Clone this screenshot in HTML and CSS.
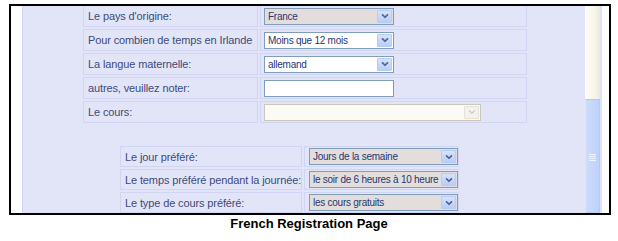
FILE: index.html
```html
<!DOCTYPE html>
<html lang="fr">
<head>
  <meta charset="UTF-8">
  <title>French Registration Page</title>
  <link rel="stylesheet" href="styles.css">
</head>
<body>
<div class="shot">
  <div class="gutter"></div>
  <div class="page">
    <div class="form main-form">
      <div class="cell label">Le pays d'origine:</div>
      <div class="cell field">
        <div class="select grey w-short"><span class="value">France</span><span class="arrow"><svg viewBox="0 0 9 6"><polyline points="1.2,1.2 4.5,4.4 7.8,1.2"/></svg></span></div>
      </div>
      <div class="cell label">Pour combien de temps en Irlande</div>
      <div class="cell field">
        <div class="select w-short"><span class="value">Moins que 12 mois</span><span class="arrow"><svg viewBox="0 0 9 6"><polyline points="1.2,1.2 4.5,4.4 7.8,1.2"/></svg></span></div>
      </div>
      <div class="cell label">La langue maternelle:</div>
      <div class="cell field">
        <div class="select w-short"><span class="value">allemand</span><span class="arrow"><svg viewBox="0 0 9 6"><polyline points="1.2,1.2 4.5,4.4 7.8,1.2"/></svg></span></div>
      </div>
      <div class="cell label">autres, veuillez noter:</div>
      <div class="cell field">
        <div class="textbox w-short"></div>
      </div>
      <div class="cell label">Le cours:</div>
      <div class="cell field">
        <div class="select disabled w-long"><span class="value"></span><span class="arrow"><svg viewBox="0 0 9 6"><polyline points="1.2,1.2 4.5,4.4 7.8,1.2"/></svg></span></div>
      </div>
    </div>

    <div class="form pref-form">
      <div class="cell label">Le jour préféré:</div>
      <div class="cell field">
        <div class="select grey w-pref"><span class="value">Jours de la semaine</span><span class="arrow"><svg viewBox="0 0 9 6"><polyline points="1.2,1.2 4.5,4.4 7.8,1.2"/></svg></span></div>
      </div>
      <div class="cell label">Le temps préféré pendant la journée:</div>
      <div class="cell field">
        <div class="select grey w-pref"><span class="value">le soir de 6 heures à 10 heure</span><span class="arrow"><svg viewBox="0 0 9 6"><polyline points="1.2,1.2 4.5,4.4 7.8,1.2"/></svg></span></div>
      </div>
      <div class="cell label">Le type de cours préféré:</div>
      <div class="cell field">
        <div class="select grey w-pref"><span class="value">les cours gratuits</span><span class="arrow"><svg viewBox="0 0 9 6"><polyline points="1.2,1.2 4.5,4.4 7.8,1.2"/></svg></span></div>
      </div>
    </div>
  </div>
  <div class="scroll">
    <div class="thumb"><span class="grip"></span></div>
  </div>
  <div class="edge"></div>
  <div class="margin"></div>
</div>
<p class="caption">French Registration Page</p>
</body>
</html>
```

FILE: styles.css
```css
body {
  margin: 0;
  background: #fff;
  font-family: "Liberation Sans", Arial, sans-serif;
}

/* framed screenshot */
.shot {
  box-sizing: border-box;
  width: 602px;
  height: 211px;
  margin: 4px 0 0 9px;
  border: 2px solid #000;
  display: flex;
  overflow: hidden;
  background: #fff;
}

.gutter {
  width: 11px;
  flex: none;
}

.page {
  box-sizing: border-box;
  width: 563px;
  flex: none;
  background: #e2e5f8;
  border-left: 1px solid #d2d6f4;
  overflow: hidden;
}

/* form tables */
.form {
  display: grid;
  gap: 2px;
}

.main-form {
  margin: -1px 0 0 60px;
  grid-template-columns: 175px 267px;
  grid-auto-rows: 22px;
}

.pref-form {
  margin: 23px 0 0 97px;
  grid-template-columns: 182px 155px;
  grid-auto-rows: 21px;
}

.cell {
  box-sizing: border-box;
  border: 1px solid #d0d5f4;
  display: flex;
  align-items: center;
}

.label {
  padding-left: 4px;
  font-size: 11px;
  letter-spacing: -0.12px;
  color: #3d4a7a;
  white-space: nowrap;
}

.field {
  padding-left: 3px;
}

.pref-form .field {
  padding-left: 4px;
}

/* XP style controls */
.select,
.textbox {
  box-sizing: border-box;
  height: 17px;
  border: 1px solid #7f9db9;
  background: #fff;
  display: flex;
  align-items: stretch;
}

.w-short {
  width: 130px;
}

.w-long {
  width: 217px;
}

.w-pref {
  width: 149px;
}

.select.grey {
  background: #e3dedb;
}

.value {
  flex: 1;
  overflow: hidden;
  padding-left: 3px;
  font-size: 10px;
  letter-spacing: -0.25px;
  line-height: 15px;
  color: #263773;
  white-space: nowrap;
}

.arrow {
  box-sizing: border-box;
  width: 15px;
  margin: 1px;
  border: 1px solid #b7cbf7;
  border-radius: 1px;
  background: linear-gradient(#d6e2fd, #b9cdf9);
  display: flex;
  align-items: center;
  justify-content: center;
}

.arrow svg {
  width: 8px;
  height: 6px;
}

.arrow polyline {
  fill: none;
  stroke: #4a5f8c;
  stroke-width: 1.8;
}

.select.disabled {
  border-color: #cbc8bb;
  background: #fbfaf4;
}

.select.disabled .arrow {
  border-color: #e3e1d8;
  background: #f3f2ec;
}

.select.disabled .arrow polyline {
  stroke: #c9c7bf;
  stroke-width: 1.2;
}

/* scrollbar */
.scroll {
  width: 15px;
  flex: none;
  display: flex;
  flex-direction: column;
  padding-top: 93px;
  background: linear-gradient(90deg, #fdfcf7, #f6f3ea 70%, #ece8db);
}

.thumb {
  flex: 1;
  box-sizing: border-box;
  border: 1px solid #b5c9f5;
  border-left-color: #dbe5fd;
  background: linear-gradient(90deg, #cddcfc, #bed1fa);
  display: flex;
  justify-content: center;
  padding-top: 54px;
}

.grip {
  width: 7px;
  height: 7px;
  background: repeating-linear-gradient(#eef3fe 0 1px, transparent 1px 2px);
}

.edge {
  width: 2px;
  flex: none;
  background: #dde2fa;
}

.margin {
  flex: 1;
}

.caption {
  margin: 1px 0 0;
  text-align: center;
  font-size: 13px;
  font-weight: bold;
  line-height: 15px;
  color: #000;
}
```
